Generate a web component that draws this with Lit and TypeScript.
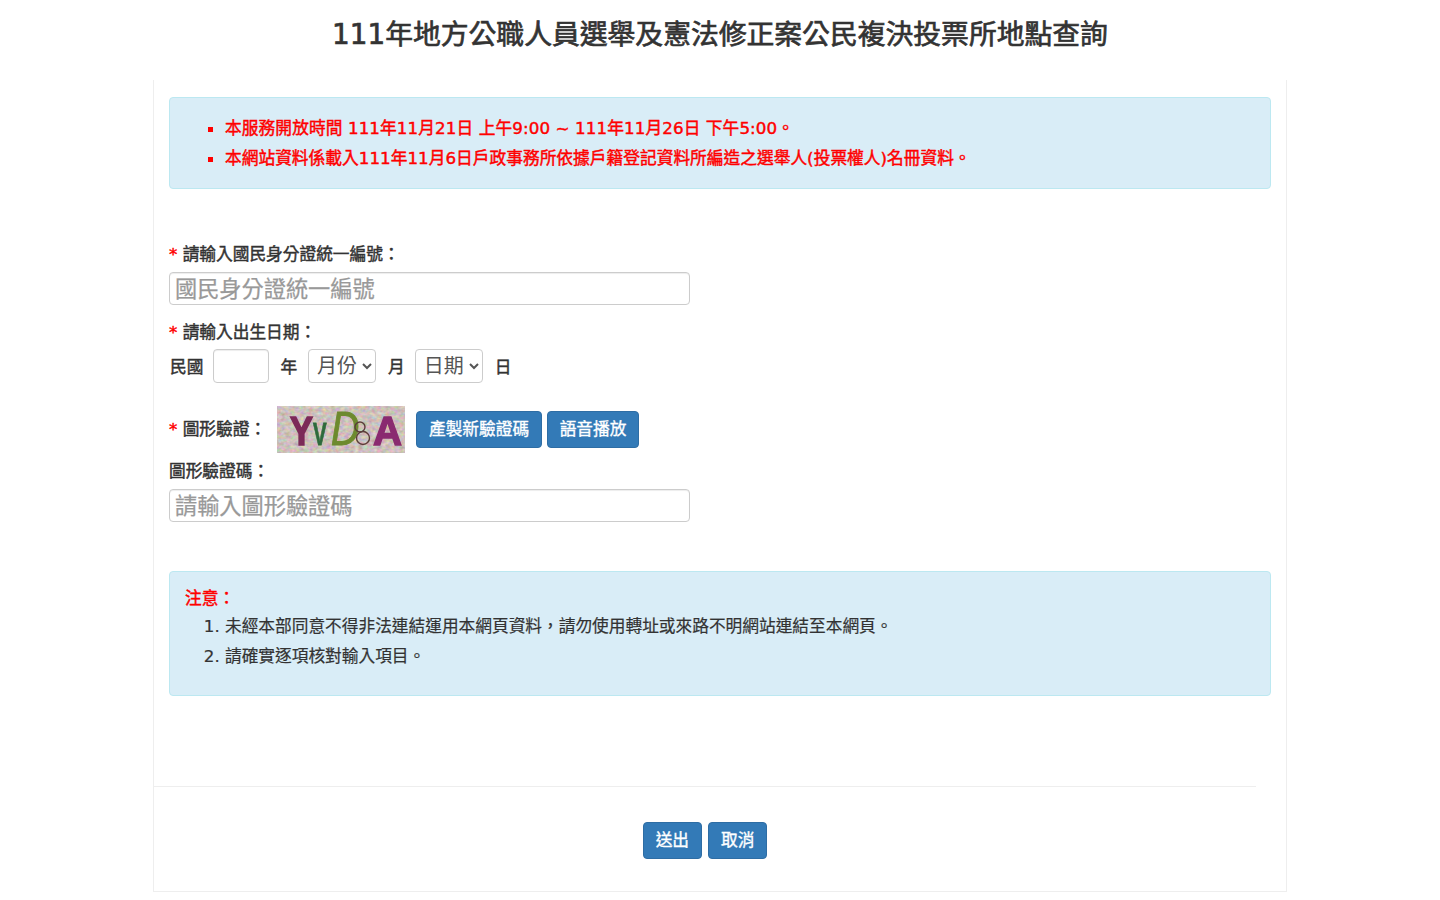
import { LitElement, html, css } from "lit";
import { customElement } from "lit/decorators.js";

@customElement("app-root")
export class AppRoot extends LitElement {
  static styles = css`
    :host {
      display: block;
      min-height: 900px;
      background: #fff;
      color: #333;
      font-family: "DejaVu Sans", "Noto Sans CJK TC", sans-serif;
      font-size: 16.7px;
    }
    * { box-sizing: border-box; }
    h1 {
      margin: 0;
      height: 80px;
      padding-top: 15px;
      text-align: center;
      font-size: 27.8px;
      line-height: 40px;
      font-weight: 400;
      -webkit-text-stroke: 0.7px currentColor;
      color: #333;
    }
    .panel {
      width: 1134px;
      height: 812px;
      margin-left: 153px;
      padding: 17px 15px 0;
      border: 1px solid #eee;
      border-top: 0;
    }
    .alert {
      background: #d9edf7;
      border: 1px solid #bce8f1;
      border-radius: 4px;
    }
    .notice { height: 92px; padding: 15px 15px 0 39px; }
    .notice ul {
      margin: 0;
      padding: 0 0 0 16px;
      list-style: square;
      color: #f00;
      line-height: 30px;
      -webkit-text-stroke: 0.45px currentColor;
    }
    .notice li:first-child { letter-spacing: 0.1px; }
    .notice li:last-child { letter-spacing: 0.03px; }
    .label {
      line-height: 22px;
      -webkit-text-stroke: 0.45px currentColor;
      padding-top: 1px;
      height: 22px;
    }
    .star { color: #f00; }
    .first { margin-top: 53px; }
    .second { margin-top: 15px; }
    .third { margin-top: 6px; }
    .text-input {
      display: block;
      width: 521px;
      height: 33px;
      margin-top: 8px;
      padding: 0 5px;
      border: 1px solid #ccc;
      border-radius: 4px;
      background: #fff;
      box-shadow: inset 0 1px 1px rgba(0, 0, 0, 0.075);
      font: inherit;
      font-size: 22.2px;
      color: #333;
      outline: none;
    }
    .text-input::placeholder {
      color: #999;
      opacity: 1;
      -webkit-text-stroke: 0.25px currentColor;
    }
    .date {
      display: flex;
      align-items: center;
      gap: 11px;
      height: 34px;
      margin-top: 7px;
    }
    .date span { -webkit-text-stroke: 0.45px currentColor; }
    .date span:first-child { margin: 0 -1px 0 1px; }
    .date input {
      width: 56px;
      height: 34px;
      border: 1px solid #ccc;
      border-radius: 4px;
      background: #fff;
      box-shadow: inset 0 1px 1px rgba(0, 0, 0, 0.075);
      outline: none;
    }
    .date select {
      width: 68px;
      height: 34px;
      margin-right: 1px;
      padding: 0 2px 0 4px;
      border: 1px solid #ccc;
      border-radius: 4px;
      background: #fff;
      font: inherit;
      font-size: 20px;
      color: #555;
    }
    .date select + span + select { margin-left: -1px; }
    .captcha-row {
      display: flex;
      align-items: center;
      height: 47px;
      margin-top: 23px;
    }
    .captcha-row .label { width: 108px; padding-top: 0; margin-top: -2px; }
    .captcha { display: block; width: 128px; height: 47px; margin-right: 11px; }
    .captcha text {
      font-family: "Liberation Sans", sans-serif;
      font-weight: 700;
    }
    .captcha .thin { font-weight: 400; }
    .btn {
      height: 37px;
      padding: 0 12px;
      border: 1px solid #2e6da4;
      border-radius: 4px;
      background: #337ab7;
      color: #fff;
      font: inherit;
      line-height: 35px;
      -webkit-text-stroke: 0.35px currentColor;
    }
    .captcha-row .btn + .btn { margin-left: 5px; padding: 0 11.5px; }
    .notes { height: 125px; margin-top: 49px; padding: 15px 15px 0; }
    .notes .title {
      color: #f00;
      line-height: 22px;
      -webkit-text-stroke: 0.45px currentColor;
    }
    .notes ol {
      margin: 2px 0 0;
      padding: 0 0 0 40px;
      line-height: 30px;
      -webkit-text-stroke: 0.2px currentColor;
    }
    .divider { height: 1px; margin: 90px 0 0 -15px; width: 1102px; background: #eee; }
    .actions {
      display: flex;
      justify-content: center;
      gap: 6px;
      width: 1102px;
      margin: 35px 0 0 -15px;
    }
  `;

  render() {
    return html`
      <h1>111年地方公職人員選舉及憲法修正案公民複決投票所地點查詢</h1>
      <div class="panel">
        <div class="alert notice">
          <ul>
            <li>本服務開放時間 111年11月21日 上午9:00 ~ 111年11月26日 下午5:00。</li>
            <li>本網站資料係載入111年11月6日戶政事務所依據戶籍登記資料所編造之選舉人(投票權人)名冊資料。</li>
          </ul>
        </div>

        <div class="label first"><span class="star">*</span> 請輸入國民身分證統一編號：</div>
        <input class="text-input" placeholder="國民身分證統一編號" />

        <div class="label second"><span class="star">*</span> 請輸入出生日期：</div>
        <div class="date">
          <span>民國</span>
          <input />
          <span>年</span>
          <select><option>月份</option></select>
          <span>月</span>
          <select><option>日期</option></select>
          <span>日</span>
        </div>

        <div class="captcha-row">
          <div class="label"><span class="star">*</span> 圖形驗證：</div>
          <svg class="captcha" viewBox="0 0 128 47" role="img" aria-label="YVD9A">
            <defs>
              <filter id="noise" x="0" y="0" width="100%" height="100%" color-interpolation-filters="sRGB">
                <feTurbulence type="fractalNoise" baseFrequency="0.22 0.3" numOctaves="2" seed="7" />
                <feColorMatrix
                  type="matrix"
                  values="0.35 0 0 0 0.63  0 0.35 0 0 0.58  0 0 0.35 0 0.56  0 0 0 0 1"
                />
              </filter>
              <filter id="soft"><feGaussianBlur stdDeviation="0.5" /></filter>
            </defs>
            <rect width="128" height="47" filter="url(#noise)" />
            <g filter="url(#soft)">
              <text transform="translate(13 39) scale(0.84 1)" font-size="41" fill="#7c2a58" stroke="#7c2a58" stroke-width="1.6">Y</text>
              <text transform="translate(36 39) scale(0.66 1)" font-size="31" fill="#2f6b3c" stroke="#2f6b3c" stroke-width="0.8">V</text>
              <text class="thin" transform="translate(54 39) scale(0.8 1)" font-size="49" fill="#6d8a2e" font-style="italic" stroke="#6d8a2e" stroke-width="1">D</text>
              <circle cx="83" cy="21" r="5" fill="none" stroke="#5a3d3a" stroke-width="1.4" />
              <circle cx="86" cy="32" r="6.5" fill="none" stroke="#5a3d3a" stroke-width="1.4" />
              <text transform="translate(96 39) scale(0.98 1)" font-size="41" fill="#8a2c70" stroke="#8a2c70" stroke-width="1.4">A</text>
            </g>
          </svg>
          <button class="btn">產製新驗證碼</button>
          <button class="btn">語音播放</button>
        </div>

        <div class="label third">圖形驗證碼：</div>
        <input class="text-input" placeholder="請輸入圖形驗證碼" />

        <div class="alert notes">
          <div class="title">注意：</div>
          <ol>
            <li>未經本部同意不得非法連結運用本網頁資料，請勿使用轉址或來路不明網站連結至本網頁。</li>
            <li>請確實逐項核對輸入項目。</li>
          </ol>
        </div>

        <div class="divider"></div>
        <div class="actions">
          <button class="btn">送出</button>
          <button class="btn">取消</button>
        </div>
      </div>
    `;
  }
}
